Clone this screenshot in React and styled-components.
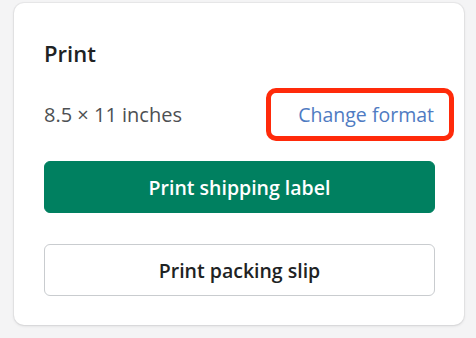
import React from 'react'
import styled, { createGlobalStyle } from 'styled-components'

const GlobalStyle = createGlobalStyle`
  html, body {
    margin: 0;
    padding: 0;
    background: #f4f4f5;
  }
  body {
    font-family: 'Open Sans', 'Noto Sans', sans-serif;
    -webkit-font-smoothing: antialiased;
  }
`

const Page = styled.div`
  width: 476px;
  height: 338px;
  box-sizing: border-box;
  padding: 3px 12px 0 14px;
`

const Card = styled.section`
  box-sizing: border-box;
  width: 450px;
  height: 322px;
  background: #ffffff;
  border-radius: 10px;
  box-shadow: 0 0 0 1px rgba(63, 63, 68, 0.05), 0 1px 3px rgba(63, 63, 68, 0.15);
  padding: 36px 29px 0 30px;
  display: flex;
  flex-direction: column;
`

const Title = styled.h2`
  margin: 0;
  font-size: 22px;
  line-height: 28px;
  font-weight: 600;
  color: #202223;
`

const FormatRow = styled.div`
  display: flex;
  align-items: center;
  justify-content: space-between;
  margin-top: 34px;
  height: 28px;
`

const Size = styled.span`
  font-size: 20px;
  line-height: 28px;
  color: #4d5053;
`

const LinkWrap = styled.span`
  position: relative;
  display: inline-block;
  margin-right: 1px;
`

const FormatLink = styled.a`
  font-size: 19.5px;
  line-height: 28px;
  color: #4f7bc2;
  text-decoration: none;
  cursor: pointer;
`

/* red annotation box drawn over the link */
const Highlight = styled.span`
  position: absolute;
  left: -32px;
  right: -20px;
  top: -13px;
  bottom: -12px;
  border: 5px solid #ff2a0a;
  border-radius: 10px;
  pointer-events: none;
`

const Actions = styled.div`
  display: flex;
  flex-direction: column;
  gap: 31px;
  margin-top: 32px;
`

const Button = styled.button`
  box-sizing: border-box;
  width: 100%;
  height: 52px;
  border-radius: 6px;
  font-family: inherit;
  font-size: 19.5px;
  font-weight: 600;
  cursor: pointer;
  background: ${props => (props.primary ? '#008060' : '#ffffff')};
  color: ${props => (props.primary ? '#ffffff' : '#202223')};
  border: 1px solid ${props => (props.primary ? '#008060' : '#c9cccf')};
`

function App() {
  return (
    <Page>
      <GlobalStyle />
      <Card>
        <Title>Print</Title>
        <FormatRow>
          <Size>8.5 × 11 inches</Size>
          <LinkWrap>
            <FormatLink>Change format</FormatLink>
            <Highlight />
          </LinkWrap>
        </FormatRow>
        <Actions>
          <Button primary>Print shipping label</Button>
          <Button>Print packing slip</Button>
        </Actions>
      </Card>
    </Page>
  )
}

export default App
